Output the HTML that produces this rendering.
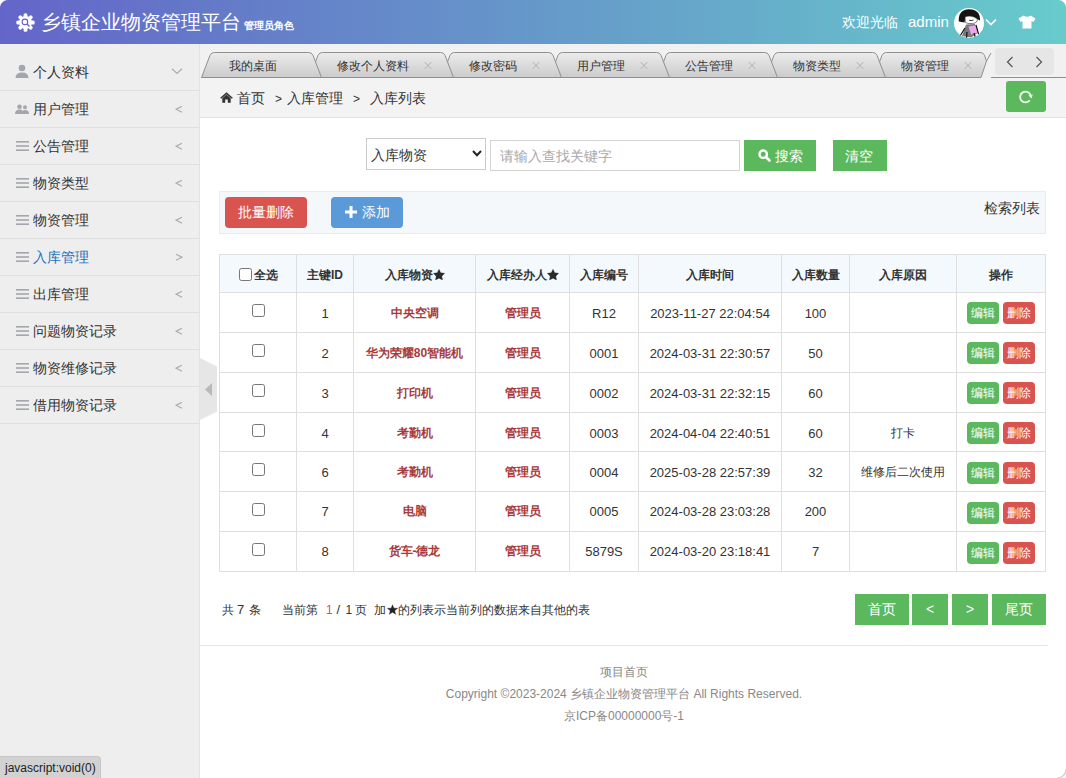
<!DOCTYPE html>
<html><head><meta charset="utf-8"><style>
*{margin:0;padding:0;box-sizing:border-box}
html,body{width:1066px;height:778px;overflow:hidden;background:#fff;font-family:"Liberation Sans",sans-serif;color:#333}
.abs{position:absolute}
.nw{white-space:nowrap}
#hdr{position:absolute;left:0;top:0;width:1066px;height:44px;background:linear-gradient(90deg,#6465c8 0%,#67cbcb 100%)}
#side{position:absolute;left:0;top:44px;width:200px;height:734px;background:#eeeeee;border-right:1px solid #e2e2e2}
.mi{position:absolute;left:0;width:199px;height:37px;border-bottom:1px solid #dfdfdf}
.mi .t{position:absolute;left:33px;top:9px;font-size:14px;line-height:18px;color:#333;white-space:nowrap}
.mi svg{position:absolute}
#tabsbar{position:absolute;left:200px;top:44px;width:866px;height:34px;background:#f1f1f1}
#bc{position:absolute;left:200px;top:78px;width:866px;height:40px;background:#f3f3f3;border-bottom:1px solid #e3e3e3}
.tab{position:absolute;top:52px;height:26px}
.tab .tt{position:absolute;top:5px;font-size:13px;line-height:16px;color:#222;white-space:nowrap}
.tab .x{position:absolute;top:4px;font-size:14px;line-height:16px;color:#aaa}
table{position:absolute;border-collapse:collapse;table-layout:fixed}
td,th{border:1px solid #dfdfdf;text-align:center;font-size:12px;padding:0}
th{background:#f3f9fd;font-weight:bold;color:#333;padding-top:3px}
td{color:#333;padding-top:3px}
td.n{font-size:13px}
td.r{color:#a83a3a;font-weight:bold}
.btn{position:absolute;color:#fff;font-size:14px;text-align:center;white-space:nowrap;font-weight:500}
.g{background:#5cb85c}
.red{background:#d9534f}
.ob{display:inline-block;width:32px;height:22px;line-height:22px;border-radius:4px;color:#fff;font-size:12px;vertical-align:middle;font-weight:500}
.cb{display:inline-block;width:13px;height:13px;border:1px solid #767676;border-radius:2.5px;background:#fff;vertical-align:middle}
</style></head><body>
<div id="hdr">
  <svg class="abs" style="left:16px;top:13px" width="19" height="19" viewBox="0 0 20 20">
    <g fill="#fff"><circle cx="10" cy="10" r="6.8"/><rect x="8" y="0.3" width="4" height="5" rx="1.6" transform="rotate(0 10 10)"/><rect x="8" y="0.3" width="4" height="5" rx="1.6" transform="rotate(45 10 10)"/><rect x="8" y="0.3" width="4" height="5" rx="1.6" transform="rotate(90 10 10)"/><rect x="8" y="0.3" width="4" height="5" rx="1.6" transform="rotate(135 10 10)"/><rect x="8" y="0.3" width="4" height="5" rx="1.6" transform="rotate(180 10 10)"/><rect x="8" y="0.3" width="4" height="5" rx="1.6" transform="rotate(225 10 10)"/><rect x="8" y="0.3" width="4" height="5" rx="1.6" transform="rotate(270 10 10)"/><rect x="8" y="0.3" width="4" height="5" rx="1.6" transform="rotate(315 10 10)"/></g>
    <circle cx="9.4" cy="9.4" r="2.9" fill="none" stroke="#6466c8" stroke-width="1.2"/>
    <path d="M11.6 11.6 L14.2 14.2" stroke="#6466c8" stroke-width="1.4"/>
  </svg>
  <div class="abs nw" style="left:41px;top:9px;font-size:20px;line-height:26px;color:#fff">乡镇企业物资管理平台<span style="font-size:10px;font-weight:bold;margin-left:3px">管理员角色</span></div>
  <div class="abs nw" style="left:842px;top:13px;font-size:14px;line-height:18px;color:#fff">欢迎光临</div>
  <div class="abs nw" style="left:908px;top:12px;font-size:15px;line-height:20px;color:#fff">admin</div>
  <div class="abs" style="left:954px;top:8px;width:30px;height:30px;border-radius:50%;background:#fff;overflow:hidden">
    <svg width="30" height="30" viewBox="0 0 30 30">
      <path d="M8 28 L12 16.5 L21 16 L23.5 25 L17 29.5 Z" fill="#7a7a7a"/>
      <path d="M14.5 18.5 L22.5 17 L24 24.5 L17 26.5 Z" fill="#eba6ea"/>
      <path d="M11 20 L6 28 M13 24 L12.5 30 M20 25 L21.5 30 M22 17 L24.5 26" stroke="#111" stroke-width="1.2" fill="none"/>
      <path d="M4.8 13.5 Q3.8 2 15 1.2 Q26.5 1.5 26 12.5 L23 11 Q18 7.5 11.5 9 L10.5 14.5 Z" fill="#141414"/>
      <path d="M11 9 Q17 6.5 23.2 10.8 Q24 15 18.5 15.5 Q13 16 11.5 14.5 Z" fill="#fff" stroke="#333" stroke-width="0.6"/>
      <path d="M15 12.2 Q17 13.2 19.5 12" stroke="#222" stroke-width="0.9" fill="none"/>
    </svg>
  </div>
  <svg class="abs" style="left:985px;top:18px" width="12" height="8" viewBox="0 0 12 8"><path d="M1 1.5 L6 6.5 L11 1.5" fill="none" stroke="#fff" stroke-width="1.6"/></svg>
  <svg class="abs" style="left:1018px;top:15px" width="18" height="14" viewBox="0 0 18 14"><path d="M5.5 0.5 L0.5 3.5 L2.5 7 L4.5 6 L4.5 13.5 L13.5 13.5 L13.5 6 L15.5 7 L17.5 3.5 L12.5 0.5 Q9 3 5.5 0.5 Z" fill="#fff"/></svg>
</div>
<div class="abs" style="left:0;top:0;width:8px;height:8px;background:radial-gradient(circle at 8px 8px,transparent 7.5px,#fff 8.5px)"></div>
<div class="abs" style="left:1058px;top:0;width:8px;height:8px;background:radial-gradient(circle at 0 8px,transparent 7.5px,#fff 8.5px)"></div>

<div id="side">
<div class="mi" style="top:10px"><svg style="left:15px;top:10px" width="14" height="14" viewBox="0 0 14 14"><circle cx="7" cy="4" r="3.3" fill="#a3a6ad"/><path d="M0.5 14 Q0.5 8.5 7 8.5 Q13.5 8.5 13.5 14 Z" fill="#a3a6ad"/></svg><div class="t" style="color:#333">个人资料</div><svg style="left:171px;top:14px" width="12" height="8" viewBox="0 0 12 8"><path d="M1 0.8 L6 5.5 L11 0.8" fill="none" stroke="#adadad" stroke-width="1.25"/></svg></div>
<div class="mi" style="top:47px"><svg style="left:15px;top:13px" width="14" height="10" viewBox="0 0 14 10"><circle cx="4.5" cy="2.7" r="2.3" fill="#a3a6ad"/><path d="M0 10 Q0 5.5 4.5 5.5 Q9 5.5 9 10 Z" fill="#a3a6ad"/><circle cx="10" cy="3.2" r="2" fill="#a3a6ad"/><path d="M7 10 Q7 6 10 6 Q14 6 14 10 Z" fill="#a3a6ad"/></svg><div class="t" style="color:#333">用户管理</div><svg style="left:175px;top:14px" width="8" height="9" viewBox="0 0 8 9"><path d="M7 1.2 L1.2 4.2 L7 7.2" fill="none" stroke="#adadad" stroke-width="1.25"/></svg></div>
<div class="mi" style="top:84px"><svg style="left:16px;top:13px" width="13" height="10" viewBox="0 0 13 10"><rect x="0" y="0" width="13" height="1.6" fill="#a3a6ad"/><rect x="0" y="4.2" width="13" height="1.6" fill="#a3a6ad"/><rect x="0" y="8.4" width="13" height="1.6" fill="#a3a6ad"/></svg><div class="t" style="color:#333">公告管理</div><svg style="left:175px;top:14px" width="8" height="9" viewBox="0 0 8 9"><path d="M7 1.2 L1.2 4.2 L7 7.2" fill="none" stroke="#adadad" stroke-width="1.25"/></svg></div>
<div class="mi" style="top:121px"><svg style="left:16px;top:13px" width="13" height="10" viewBox="0 0 13 10"><rect x="0" y="0" width="13" height="1.6" fill="#a3a6ad"/><rect x="0" y="4.2" width="13" height="1.6" fill="#a3a6ad"/><rect x="0" y="8.4" width="13" height="1.6" fill="#a3a6ad"/></svg><div class="t" style="color:#333">物资类型</div><svg style="left:175px;top:14px" width="8" height="9" viewBox="0 0 8 9"><path d="M7 1.2 L1.2 4.2 L7 7.2" fill="none" stroke="#adadad" stroke-width="1.25"/></svg></div>
<div class="mi" style="top:158px"><svg style="left:16px;top:13px" width="13" height="10" viewBox="0 0 13 10"><rect x="0" y="0" width="13" height="1.6" fill="#a3a6ad"/><rect x="0" y="4.2" width="13" height="1.6" fill="#a3a6ad"/><rect x="0" y="8.4" width="13" height="1.6" fill="#a3a6ad"/></svg><div class="t" style="color:#333">物资管理</div><svg style="left:175px;top:14px" width="8" height="9" viewBox="0 0 8 9"><path d="M7 1.2 L1.2 4.2 L7 7.2" fill="none" stroke="#adadad" stroke-width="1.25"/></svg></div>
<div class="mi" style="top:195px"><svg style="left:16px;top:13px" width="13" height="10" viewBox="0 0 13 10"><rect x="0" y="0" width="13" height="1.6" fill="#a3a6ad"/><rect x="0" y="4.2" width="13" height="1.6" fill="#a3a6ad"/><rect x="0" y="8.4" width="13" height="1.6" fill="#a3a6ad"/></svg><div class="t" style="color:#1e6fbf">入库管理</div><svg style="left:175px;top:14px" width="8" height="9" viewBox="0 0 8 9"><path d="M1 1.2 L6.8 4.2 L1 7.2" fill="none" stroke="#adadad" stroke-width="1.25"/></svg></div>
<div class="mi" style="top:232px"><svg style="left:16px;top:13px" width="13" height="10" viewBox="0 0 13 10"><rect x="0" y="0" width="13" height="1.6" fill="#a3a6ad"/><rect x="0" y="4.2" width="13" height="1.6" fill="#a3a6ad"/><rect x="0" y="8.4" width="13" height="1.6" fill="#a3a6ad"/></svg><div class="t" style="color:#333">出库管理</div><svg style="left:175px;top:14px" width="8" height="9" viewBox="0 0 8 9"><path d="M7 1.2 L1.2 4.2 L7 7.2" fill="none" stroke="#adadad" stroke-width="1.25"/></svg></div>
<div class="mi" style="top:269px"><svg style="left:16px;top:13px" width="13" height="10" viewBox="0 0 13 10"><rect x="0" y="0" width="13" height="1.6" fill="#a3a6ad"/><rect x="0" y="4.2" width="13" height="1.6" fill="#a3a6ad"/><rect x="0" y="8.4" width="13" height="1.6" fill="#a3a6ad"/></svg><div class="t" style="color:#333">问题物资记录</div><svg style="left:175px;top:14px" width="8" height="9" viewBox="0 0 8 9"><path d="M7 1.2 L1.2 4.2 L7 7.2" fill="none" stroke="#adadad" stroke-width="1.25"/></svg></div>
<div class="mi" style="top:306px"><svg style="left:16px;top:13px" width="13" height="10" viewBox="0 0 13 10"><rect x="0" y="0" width="13" height="1.6" fill="#a3a6ad"/><rect x="0" y="4.2" width="13" height="1.6" fill="#a3a6ad"/><rect x="0" y="8.4" width="13" height="1.6" fill="#a3a6ad"/></svg><div class="t" style="color:#333">物资维修记录</div><svg style="left:175px;top:14px" width="8" height="9" viewBox="0 0 8 9"><path d="M7 1.2 L1.2 4.2 L7 7.2" fill="none" stroke="#adadad" stroke-width="1.25"/></svg></div>
<div class="mi" style="top:343px"><svg style="left:16px;top:13px" width="13" height="10" viewBox="0 0 13 10"><rect x="0" y="0" width="13" height="1.6" fill="#a3a6ad"/><rect x="0" y="4.2" width="13" height="1.6" fill="#a3a6ad"/><rect x="0" y="8.4" width="13" height="1.6" fill="#a3a6ad"/></svg><div class="t" style="color:#333">借用物资记录</div><svg style="left:175px;top:14px" width="8" height="9" viewBox="0 0 8 9"><path d="M7 1.2 L1.2 4.2 L7 7.2" fill="none" stroke="#adadad" stroke-width="1.25"/></svg></div>
</div>
<svg class="abs" style="left:200px;top:358px" width="18" height="63" viewBox="0 0 18 63"><path d="M0 0 L17 8.5 L17 53.5 L0 62 Z" fill="#e6e6e6"/><path d="M12 25 L5 31.5 L12 38 Z" fill="#b9b9b9"/></svg>
<div id="tabsbar"></div>
<div class="abs" style="left:200px;top:44px;width:791px;height:34px;overflow:hidden">
<div class="abs" style="left:0.5px;top:8px;width:121px;height:26px;z-index:100"><svg class="abs" style="left:0;top:0" width="121" height="26" viewBox="0 0 121 26"><defs><linearGradient id="tg0" x1="0" y1="0" x2="0" y2="1"><stop offset="0" stop-color="#ececec"/><stop offset="1" stop-color="#cbcbcb"/></linearGradient></defs><path d="M0.5 25.5 L9 3.3 Q10.2 0.5 13.5 0.5 L107.5 0.5 Q110.8 0.5 112 3.3 L120.5 25.5 Z" fill="url(#tg0)" stroke="#8f8f8f" stroke-width="1"/>
</svg>
<div class="abs nw" style="left:28.5px;top:6px;font-size:12px;line-height:17px;color:#333">我的桌面</div>
</div>
<div class="abs" style="left:108.5px;top:8px;width:145px;height:26px;z-index:99"><svg class="abs" style="left:0;top:0" width="145" height="26" viewBox="0 0 145 26"><defs><linearGradient id="tg1" x1="0" y1="0" x2="0" y2="1"><stop offset="0" stop-color="#ececec"/><stop offset="1" stop-color="#cbcbcb"/></linearGradient></defs><path d="M0.5 25.5 L9 3.3 Q10.2 0.5 13.5 0.5 L131.5 0.5 Q134.8 0.5 136 3.3 L144.5 25.5 Z" fill="url(#tg1)" stroke="#8f8f8f" stroke-width="1"/>
<path d="M115.7 10.2 L122.3 16.8 M122.3 10.2 L115.7 16.8" stroke="#ababab" stroke-width="0.9"/>
</svg>
<div class="abs nw" style="left:28.5px;top:6px;font-size:12px;line-height:17px;color:#333">修改个人资料</div>
</div>
<div class="abs" style="left:240.5px;top:8px;width:121px;height:26px;z-index:98"><svg class="abs" style="left:0;top:0" width="121" height="26" viewBox="0 0 121 26"><defs><linearGradient id="tg2" x1="0" y1="0" x2="0" y2="1"><stop offset="0" stop-color="#ececec"/><stop offset="1" stop-color="#cbcbcb"/></linearGradient></defs><path d="M0.5 25.5 L9 3.3 Q10.2 0.5 13.5 0.5 L107.5 0.5 Q110.8 0.5 112 3.3 L120.5 25.5 Z" fill="url(#tg2)" stroke="#8f8f8f" stroke-width="1"/>
<path d="M91.7 10.2 L98.3 16.8 M98.3 10.2 L91.7 16.8" stroke="#ababab" stroke-width="0.9"/>
</svg>
<div class="abs nw" style="left:28.5px;top:6px;font-size:12px;line-height:17px;color:#333">修改密码</div>
</div>
<div class="abs" style="left:348.5px;top:8px;width:121px;height:26px;z-index:97"><svg class="abs" style="left:0;top:0" width="121" height="26" viewBox="0 0 121 26"><defs><linearGradient id="tg3" x1="0" y1="0" x2="0" y2="1"><stop offset="0" stop-color="#ececec"/><stop offset="1" stop-color="#cbcbcb"/></linearGradient></defs><path d="M0.5 25.5 L9 3.3 Q10.2 0.5 13.5 0.5 L107.5 0.5 Q110.8 0.5 112 3.3 L120.5 25.5 Z" fill="url(#tg3)" stroke="#8f8f8f" stroke-width="1"/>
<path d="M91.7 10.2 L98.3 16.8 M98.3 10.2 L91.7 16.8" stroke="#ababab" stroke-width="0.9"/>
</svg>
<div class="abs nw" style="left:28.5px;top:6px;font-size:12px;line-height:17px;color:#333">用户管理</div>
</div>
<div class="abs" style="left:456.5px;top:8px;width:121px;height:26px;z-index:96"><svg class="abs" style="left:0;top:0" width="121" height="26" viewBox="0 0 121 26"><defs><linearGradient id="tg4" x1="0" y1="0" x2="0" y2="1"><stop offset="0" stop-color="#ececec"/><stop offset="1" stop-color="#cbcbcb"/></linearGradient></defs><path d="M0.5 25.5 L9 3.3 Q10.2 0.5 13.5 0.5 L107.5 0.5 Q110.8 0.5 112 3.3 L120.5 25.5 Z" fill="url(#tg4)" stroke="#8f8f8f" stroke-width="1"/>
<path d="M91.7 10.2 L98.3 16.8 M98.3 10.2 L91.7 16.8" stroke="#ababab" stroke-width="0.9"/>
</svg>
<div class="abs nw" style="left:28.5px;top:6px;font-size:12px;line-height:17px;color:#333">公告管理</div>
</div>
<div class="abs" style="left:564.5px;top:8px;width:121px;height:26px;z-index:95"><svg class="abs" style="left:0;top:0" width="121" height="26" viewBox="0 0 121 26"><defs><linearGradient id="tg5" x1="0" y1="0" x2="0" y2="1"><stop offset="0" stop-color="#ececec"/><stop offset="1" stop-color="#cbcbcb"/></linearGradient></defs><path d="M0.5 25.5 L9 3.3 Q10.2 0.5 13.5 0.5 L107.5 0.5 Q110.8 0.5 112 3.3 L120.5 25.5 Z" fill="url(#tg5)" stroke="#8f8f8f" stroke-width="1"/>
<path d="M91.7 10.2 L98.3 16.8 M98.3 10.2 L91.7 16.8" stroke="#ababab" stroke-width="0.9"/>
</svg>
<div class="abs nw" style="left:28.5px;top:6px;font-size:12px;line-height:17px;color:#333">物资类型</div>
</div>
<div class="abs" style="left:672.5px;top:8px;width:121px;height:26px;z-index:94"><svg class="abs" style="left:0;top:0" width="121" height="26" viewBox="0 0 121 26"><defs><linearGradient id="tg6" x1="0" y1="0" x2="0" y2="1"><stop offset="0" stop-color="#ececec"/><stop offset="1" stop-color="#cbcbcb"/></linearGradient></defs><path d="M0.5 25.5 L9 3.3 Q10.2 0.5 13.5 0.5 L107 0.5 Q110.5 0.5 111.5 3.3 L113.5 9 L108 25.5 Z" fill="url(#tg6)" stroke="#8f8f8f" stroke-width="1"/>
<path d="M91.7 10.2 L98.3 16.8 M98.3 10.2 L91.7 16.8" stroke="#ababab" stroke-width="0.9"/>
</svg>
<div class="abs nw" style="left:28.5px;top:6px;font-size:12px;line-height:17px;color:#333">物资管理</div>
</div>
</div>
<svg class="abs" style="left:980px;top:50px" width="14" height="14" viewBox="0 0 14 14"><path d="M11 3 L6.5 11" stroke="#8f8f8f" stroke-width="1"/></svg>
<div class="abs" style="left:991px;top:77px;width:75px;height:1px;background:#8f8f8f"></div>
<div class="abs" style="left:995px;top:48px;width:59px;height:27px;background:#e6e6e6;border-radius:4px"></div>
<svg class="abs" style="left:1006px;top:56px" width="8" height="12" viewBox="0 0 8 12"><path d="M6.5 1 L1.5 6 L6.5 11" fill="none" stroke="#555" stroke-width="1.2"/></svg>
<svg class="abs" style="left:1035px;top:56px" width="8" height="12" viewBox="0 0 8 12"><path d="M1.5 1 L6.5 6 L1.5 11" fill="none" stroke="#555" stroke-width="1.2"/></svg>

<div id="bc"></div>
<svg class="abs" style="left:220px;top:92px" width="13" height="11" viewBox="0 0 13 11"><path d="M6.5 0.3 L0.2 5.8 L1.2 6.8 L6.5 2.2 L11.8 6.8 L12.8 5.8 Z" fill="#333"/><path d="M2.3 6.2 L6.5 2.6 L10.7 6.2 L10.7 10.7 L7.8 10.7 L7.8 7.6 L5.2 7.6 L5.2 10.7 L2.3 10.7 Z" fill="#333"/></svg>
<div class="abs nw" style="left:237px;top:89px;font-size:14px;line-height:18px;color:#333">首页</div>
<div class="abs nw" style="left:275px;top:90px;font-size:12px;line-height:18px;color:#333">&gt;</div>
<div class="abs nw" style="left:287px;top:89px;font-size:14px;line-height:18px;color:#333">入库管理</div>
<div class="abs nw" style="left:353px;top:90px;font-size:12px;line-height:18px;color:#333">&gt;</div>
<div class="abs nw" style="left:370px;top:89px;font-size:14px;line-height:18px;color:#333">入库列表</div>

<div class="abs" style="left:1006px;top:81px;width:40px;height:31px;background:#5cb85c;border-radius:3px"></div>
<svg class="abs" style="left:1018px;top:89px" width="16" height="16" viewBox="0 0 16 16"><path d="M12.6 6.2 A5.4 5.4 0 1 0 11.8 11.3" fill="none" stroke="#f4fff0" stroke-width="1.8"/><path d="M10.3 6.6 L14.6 5.4 L13.6 9.6 Z" fill="#f4fff0"/></svg>

<div class="abs" style="left:366px;top:138px;width:120px;height:32px;border:1px solid #cccccc;background:#fff"></div>
<div class="abs nw" style="left:371px;top:146px;font-size:14px;line-height:18px;color:#333">入库物资</div>
<svg class="abs" style="left:472px;top:150px" width="10" height="7" viewBox="0 0 10 7"><path d="M1 1 L5 5.2 L9 1" fill="none" stroke="#222" stroke-width="2"/></svg>
<div class="abs" style="left:490px;top:140px;width:250px;height:31px;border:1px solid #d4d4d4;background:#fff"></div>
<div class="abs nw" style="left:500px;top:147px;font-size:14px;line-height:18px;color:#a8a8a8">请输入查找关键字</div>
<div class="abs" style="left:744px;top:140px;width:72px;height:31px;background:#5cb85c"></div>
<svg class="abs" style="left:758px;top:149px" width="13" height="13" viewBox="0 0 13 13"><circle cx="5.2" cy="5.2" r="3.7" fill="none" stroke="#fff" stroke-width="2.4"/><path d="M8 8 L11.5 11.5" stroke="#fff" stroke-width="2.6" stroke-linecap="round"/></svg>
<div class="abs nw" style="left:775px;top:147px;font-size:14px;line-height:18px;color:#fff">搜索</div>
<div class="abs" style="left:833px;top:140px;width:54px;height:31px;background:#5cb85c"></div>
<div class="abs nw" style="left:845px;top:147px;font-size:14px;line-height:18px;color:#fff">清空</div>

<div class="abs" style="left:219px;top:191px;width:827px;height:43px;background:#f4f8fb;border:1px solid #e6ecf0"></div>
<div class="abs" style="left:225px;top:197px;width:82px;height:31px;background:#d9534f;border-radius:4px"></div>
<div class="abs nw" style="left:238px;top:203px;font-size:14px;line-height:18px;color:#fff;font-weight:500">批量删除</div>
<div class="abs" style="left:331px;top:197px;width:72px;height:31px;background:#5a9ad9;border-radius:4px"></div>
<svg class="abs" style="left:345px;top:206px" width="12" height="12" viewBox="0 0 12 12"><rect x="4.5" y="0" width="3" height="12" fill="#fff"/><rect x="0" y="4.5" width="12" height="3" fill="#fff"/></svg>
<div class="abs nw" style="left:362px;top:203px;font-size:14px;line-height:18px;color:#fff;font-weight:500">添加</div>
<div class="abs nw" style="left:984px;top:199px;font-size:14px;line-height:18px;color:#333">检索列表</div>

<table style="left:219px;top:254px;width:827px">
<colgroup><col style="width:77px"><col style="width:57px"><col style="width:122px"><col style="width:94px"><col style="width:69px"><col style="width:143px"><col style="width:68px"><col style="width:107px"><col style="width:89px"></colgroup>
<tr style="height:38px"><th><span class="cb" style="margin-right:2px;vertical-align:-2px"></span>全选</th><th>主键ID</th><th>入库物资<svg width="12" height="11" viewBox="0 0 12 11" style="vertical-align:-1px"><path d="M6 0.2 L7.76 3.77 L11.7 4.35 L8.85 7.13 L9.53 11.05 L6 9.2 L2.47 11.05 L3.15 7.13 L0.29 4.35 L4.24 3.77 Z" fill="#2a2a2a" stroke="#2a2a2a" stroke-width="0.3" stroke-linejoin="round"/></svg></th><th>入库经办人<svg width="12" height="11" viewBox="0 0 12 11" style="vertical-align:-1px"><path d="M6 0.2 L7.76 3.77 L11.7 4.35 L8.85 7.13 L9.53 11.05 L6 9.2 L2.47 11.05 L3.15 7.13 L0.29 4.35 L4.24 3.77 Z" fill="#2a2a2a" stroke="#2a2a2a" stroke-width="0.3" stroke-linejoin="round"/></svg></th><th>入库编号</th><th>入库时间</th><th>入库数量</th><th>入库原因</th><th>操作</th></tr>
<tr style="height:39.86px"><td style="padding-top:0"><span class="cb" style="vertical-align:3px;position:relative;top:1px"></span></td><td class="n" style="padding-top:3px">1</td><td class="r" style="padding-top:3px">中央空调</td><td class="r" style="padding-top:3px">管理员</td><td class="n" style="padding-top:3px">R12</td><td class="n" style="padding-top:3px">2023-11-27 22:04:54</td><td class="n" style="padding-top:3px">100</td><td style="padding-top:3px"></td><td style="padding-top:2px"><span class="ob g">编辑</span><span class="ob red" style="margin-left:4px">删除</span></td></tr>
<tr style="height:39.86px"><td style="padding-top:0"><span class="cb" style="vertical-align:3px;position:relative;top:1px"></span></td><td class="n" style="padding-top:3px">2</td><td class="r" style="padding-top:3px">华为荣耀80智能机</td><td class="r" style="padding-top:3px">管理员</td><td class="n" style="padding-top:3px">0001</td><td class="n" style="padding-top:3px">2024-03-31 22:30:57</td><td class="n" style="padding-top:3px">50</td><td style="padding-top:3px"></td><td style="padding-top:2px"><span class="ob g">编辑</span><span class="ob red" style="margin-left:4px">删除</span></td></tr>
<tr style="height:39.86px"><td style="padding-top:0"><span class="cb" style="vertical-align:3px;position:relative;top:1px"></span></td><td class="n" style="padding-top:3px">3</td><td class="r" style="padding-top:3px">打印机</td><td class="r" style="padding-top:3px">管理员</td><td class="n" style="padding-top:3px">0002</td><td class="n" style="padding-top:3px">2024-03-31 22:32:15</td><td class="n" style="padding-top:3px">60</td><td style="padding-top:3px"></td><td style="padding-top:2px"><span class="ob g">编辑</span><span class="ob red" style="margin-left:4px">删除</span></td></tr>
<tr style="height:39.86px"><td style="padding-top:0"><span class="cb" style="vertical-align:3px;position:relative;top:1px"></span></td><td class="n" style="padding-top:2px">4</td><td class="r" style="padding-top:2px">考勤机</td><td class="r" style="padding-top:2px">管理员</td><td class="n" style="padding-top:2px">0003</td><td class="n" style="padding-top:2px">2024-04-04 22:40:51</td><td class="n" style="padding-top:2px">60</td><td style="padding-top:2px">打卡</td><td style="padding-top:2px"><span class="ob g">编辑</span><span class="ob red" style="margin-left:4px">删除</span></td></tr>
<tr style="height:39.86px"><td style="padding-top:0"><span class="cb" style="vertical-align:3px;position:relative;top:1px"></span></td><td class="n" style="padding-top:2px">6</td><td class="r" style="padding-top:2px">考勤机</td><td class="r" style="padding-top:2px">管理员</td><td class="n" style="padding-top:2px">0004</td><td class="n" style="padding-top:2px">2025-03-28 22:57:39</td><td class="n" style="padding-top:2px">32</td><td style="padding-top:2px">维修后二次使用</td><td style="padding-top:2px"><span class="ob g">编辑</span><span class="ob red" style="margin-left:4px">删除</span></td></tr>
<tr style="height:39.86px"><td style="padding-top:0"><span class="cb" style="vertical-align:3px;position:relative;top:1px"></span></td><td class="n" style="padding-top:0px">7</td><td class="r" style="padding-top:0px">电脑</td><td class="r" style="padding-top:0px">管理员</td><td class="n" style="padding-top:0px">0005</td><td class="n" style="padding-top:0px">2024-03-28 23:03:28</td><td class="n" style="padding-top:0px">200</td><td style="padding-top:0px"></td><td style="padding-top:2px"><span class="ob g">编辑</span><span class="ob red" style="margin-left:4px">删除</span></td></tr>
<tr style="height:39.86px"><td style="padding-top:0"><span class="cb" style="vertical-align:3px;position:relative;top:1px"></span></td><td class="n" style="padding-top:0px">8</td><td class="r" style="padding-top:0px">货车-德龙</td><td class="r" style="padding-top:0px">管理员</td><td class="n" style="padding-top:0px">5879S</td><td class="n" style="padding-top:0px">2024-03-20 23:18:41</td><td class="n" style="padding-top:0px">7</td><td style="padding-top:0px"></td><td style="padding-top:2px"><span class="ob g">编辑</span><span class="ob red" style="margin-left:4px">删除</span></td></tr>
</table>
<div class="abs nw" style="left:222px;top:602px;font-size:12px;line-height:16px;color:#333">共</div>
<div class="abs nw" style="left:237px;top:602px;font-size:13px;line-height:16px;color:#333">7</div>
<div class="abs nw" style="left:249px;top:602px;font-size:12px;line-height:16px;color:#333">条</div>
<div class="abs nw" style="left:282px;top:602px;font-size:12px;line-height:16px;color:#333">当前第</div>
<div class="abs nw" style="left:326px;top:602px;font-size:12px;line-height:16px;color:#d9534f">1</div>
<div class="abs nw" style="left:336.5px;top:602px;font-size:13px;line-height:16px;color:#333">/</div>
<div class="abs nw" style="left:345.5px;top:602px;font-size:12px;line-height:16px;color:#333">1</div>
<div class="abs nw" style="left:355px;top:602px;font-size:12px;line-height:16px;color:#333">页</div>
<div class="abs nw" style="left:374px;top:602px;font-size:12px;line-height:16px;color:#333">加<svg width="11" height="11" viewBox="0 0 12 11" style="vertical-align:-1px;margin:0 0.5px"><path d="M6 0.3 L7.5 4 L11.6 4.2 L8.4 6.8 L9.5 10.8 L6 8.5 L2.5 10.8 L3.6 6.8 L0.4 4.2 L4.5 4 Z" fill="#222" stroke="#222" stroke-width="0.4" stroke-linejoin="round"/></svg>的列表示当前列的数据来自其他的表</div>
<div class="btn g" style="left:855px;top:594px;width:54px;height:31px;line-height:31px">首页</div>
<div class="btn g" style="left:912px;top:594px;width:36px;height:31px;line-height:31px">&lt;</div>
<div class="btn g" style="left:952px;top:594px;width:36px;height:31px;line-height:31px">&gt;</div>
<div class="btn g" style="left:992px;top:594px;width:54px;height:31px;line-height:31px">尾页</div>

<div class="abs" style="left:200px;top:645px;width:848px;height:1px;background:#e6e6e6"></div>
<div class="abs nw" style="left:200px;top:664px;width:848px;text-align:center;font-size:12px;line-height:16px;color:#888">项目首页</div>
<div class="abs nw" style="left:200px;top:686px;width:848px;text-align:center;font-size:12px;line-height:16px;color:#888">Copyright ©2023-2024 乡镇企业物资管理平台 All Rights Reserved.</div>
<div class="abs nw" style="left:200px;top:708px;width:848px;text-align:center;font-size:12px;line-height:16px;color:#888">京ICP备00000000号-1</div>

<div class="abs" style="left:0;top:756px;width:101px;height:22px;background:#d2d2d2;border-top-right-radius:4px;border:1px solid #c6c6c6;border-left:none;border-bottom:none"></div>
<div class="abs nw" style="left:5px;top:761px;font-size:12px;line-height:14px;color:#222">javascript:void(0)</div>

<svg class="abs" style="left:1057px;top:769px" width="9" height="9" viewBox="0 0 9 9"><path d="M9 0 L9 9 L0 9 A9 9 0 0 0 9 0 Z" fill="#f4f4f4"/><path d="M0 9 A9 9 0 0 0 9 0" fill="none" stroke="#d0d0d0" stroke-width="1.2"/></svg>
</body></html>
